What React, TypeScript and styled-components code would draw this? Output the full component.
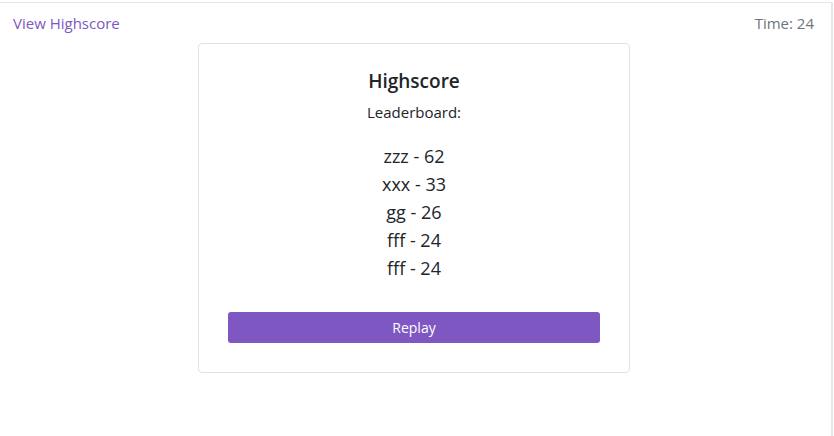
import React from 'react'
import styled, { createGlobalStyle } from 'styled-components'

const GlobalStyle = createGlobalStyle`
  body {
    margin: 0;
    background: #ffffff;
    font-family: 'Open Sans', 'Noto Sans', sans-serif;
  }
`

const colors = {
  purple: '#7e57c2',
  muted: '#6c757d',
  text: '#212529',
  border: '#dee2e6',
}

const Frame = styled.div`
  margin-top: 2px;
  width: 833px;
  height: 434px;
  border-top: 1px solid #e6e6e6;
  border-right: 2px solid #e6e6e6;
  box-sizing: border-box;
`

const Header = styled.div`
  display: flex;
  justify-content: space-between;
  align-items: center;
  padding: 11px 17px 0 13px;
  height: 29px;
  box-sizing: border-box;
  font-size: 15px;
`

const HighscoreLink = styled.a`
  color: ${colors.purple};
  text-decoration: none;
  cursor: pointer;
`

const Timer = styled.span`
  color: ${colors.muted};
`

const Card = styled.div`
  width: 432px;
  margin: 11px 0 0 198px;
  box-sizing: border-box;
  border: 1px solid ${colors.border};
  border-radius: 4px;
  padding: 23px 29px 29px;
  display: flex;
  flex-direction: column;
  align-items: center;
  color: ${colors.text};
`

const Title = styled.h2`
  margin: 0;
  font-size: 19px;
  font-weight: 600;
  line-height: 28px;
`

const Subtitle = styled.p`
  margin: 6px 0 0;
  font-size: 15px;
  line-height: 22px;
`

const ScoreList = styled.ul`
  list-style: none;
  margin: 19px 0 0;
  padding: 0;
  text-align: center;
`

const ScoreItem = styled.li`
  font-size: 18px;
  line-height: 28px;
`

const ReplayButton = styled.button`
  margin-top: 30px;
  width: 100%;
  height: 31px;
  border: none;
  border-radius: 3px;
  background: ${colors.purple};
  color: #ffffff;
  font-family: inherit;
  font-size: 14px;
  cursor: pointer;
`

const scores = [
  { name: 'zzz', score: 62 },
  { name: 'xxx', score: 33 },
  { name: 'gg', score: 26 },
  { name: 'fff', score: 24 },
  { name: 'fff', score: 24 },
]

const App: React.FC = () => {
  return (
    <>
      <GlobalStyle />
      <Frame>
        <Header>
          <HighscoreLink>View Highscore</HighscoreLink>
          <Timer>Time: 24</Timer>
        </Header>
        <Card>
          <Title>Highscore</Title>
          <Subtitle>Leaderboard:</Subtitle>
          <ScoreList>
            {scores.map((s, i) => (
              <ScoreItem key={i}>
                {s.name} - {s.score}
              </ScoreItem>
            ))}
          </ScoreList>
          <ReplayButton>Replay</ReplayButton>
        </Card>
      </Frame>
    </>
  )
}

export default App
